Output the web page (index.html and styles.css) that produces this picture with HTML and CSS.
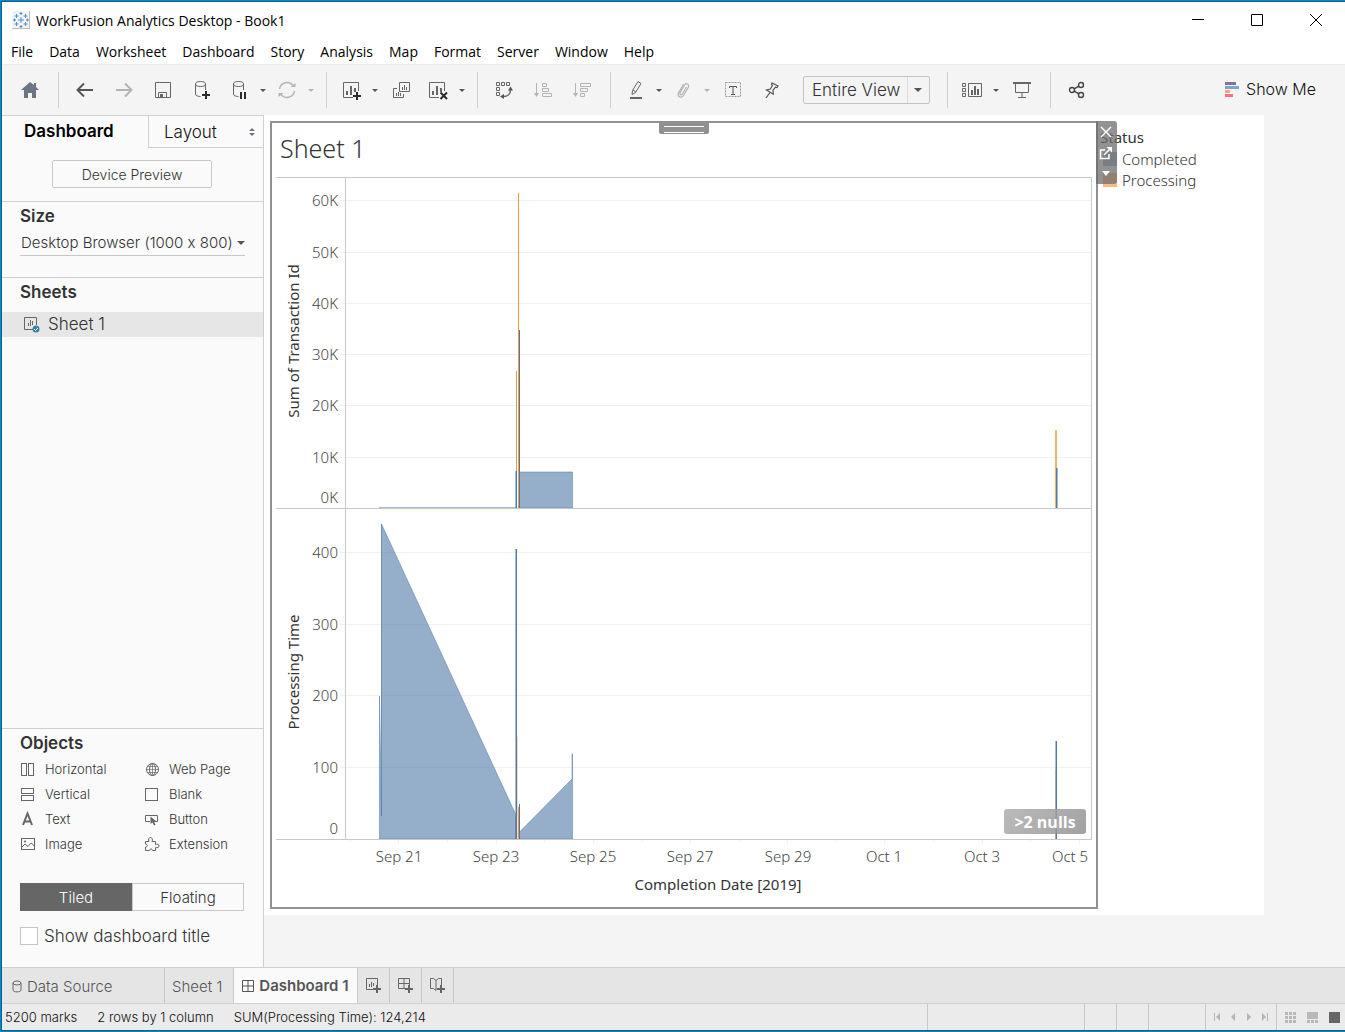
FILE: index.html
```html
<!DOCTYPE html>
<html lang="en">
<head>
    <meta charset="UTF-8">
    <meta name="viewport" content="width=device-width, initial-scale=1.0">
    <title>WorkFusion Analytics Desktop - Book1</title>
    <link rel="stylesheet" href="styles.css">
</head>
<body>
    <div class="window">
        <header class="title-bar">
            <svg class="app-icon" width="18" height="18" viewBox="0 0 18 18">
                <rect width="18" height="18" fill="#bdbdbd"/>
                <rect width="17" height="17" fill="#f4f4f4"/>
                <path d="M9 6v6M6 9h6M9 1v3M7.500 2.500h3M9 14v3M7.500 15.500h3M1 9h3M2.500 7.500v3M14 9h3M15.500 7.500v3M4.500 3v4M2.500 5h4M13.500 3v4M11.500 5h4M4.500 11v4M2.500 13h4M13.500 11v4M11.500 13h4" stroke="#4f93c4" fill="none"/>
            </svg>
            <h1>WorkFusion Analytics Desktop - Book1</h1>
            <div class="window-buttons">
                <button aria-label="Minimize"><svg width="12" height="12"><path d="M0 5.500h12" stroke="#000"/></svg></button>
                <button aria-label="Maximize"><svg width="12" height="12"><path d="M.5.5h11v11H.5z" stroke="#000" fill="none"/></svg></button>
                <button aria-label="Close"><svg width="12" height="12"><path d="M0 0l12 12M12 0L0 12" stroke="#000"/></svg></button>
            </div>
        </header>

        <nav class="menu-bar">
            <button>File</button>
            <button>Data</button>
            <button>Worksheet</button>
            <button>Dashboard</button>
            <button>Story</button>
            <button>Analysis</button>
            <button>Map</button>
            <button>Format</button>
            <button>Server</button>
            <button>Window</button>
            <button>Help</button>
        </nav>

        <div class="toolbar">
            <div class="group first">
                <button class="tool" aria-label="Home">
                    <svg width="18" height="18"><path d="M9 1L0 9h3v8h4v-5h4v5h4V9h3l-3-3V2h-2v2z" fill="#6b7585"/></svg>
                </button>
            </div>
            <div class="group">
                <button class="tool" aria-label="Undo">
                    <svg width="18" height="18"><path d="M17 9H2M8 2.500L1.500 9 8 15.500" stroke="#555" stroke-width="2" fill="none"/></svg>
                </button>
                <button class="tool" aria-label="Redo">
                    <svg width="18" height="18"><path d="M1 9h15M10 2.500L16.500 9 10 15.500" stroke="#b4b4b4" stroke-width="2" fill="none"/></svg>
                </button>
                <button class="tool" aria-label="Save">
                    <svg width="18" height="18" fill="none" stroke="#666"><path d="M1.500 1.500h15v15h-15zM4.500 16v-4.500h8V16"/><path d="M6 13h3v3H6z" fill="#666" stroke="none"/></svg>
                </button>
                <button class="tool" aria-label="New Data Source">
                    <svg width="18" height="20" fill="none" stroke="#666"><ellipse cx="7.500" cy="4" rx="5" ry="2.500"/><path d="M2.500 4v10c0 1.500 2 2.500 5 2.500M12.500 4v6"/><path d="M13 11v8M9 15h8" stroke="#2b2b2b" stroke-width="2"/></svg>
                </button>
                <button class="tool with-menu" aria-label="Pause Auto Updates">
                    <svg width="18" height="20" fill="none" stroke="#666"><ellipse cx="8.500" cy="4" rx="5" ry="2.500"/><path d="M3.500 4v10c0 1.500 2 2.500 5 2.500M13.500 4v6"/><path d="M11 12v7M15 12v7" stroke="#2b2b2b" stroke-width="2"/></svg>
                </button>
                <button class="caret" aria-label="Auto update options"></button>
                <button class="tool with-menu" aria-label="Run Update">
                    <svg width="18" height="18" fill="none" stroke="#b4b4b4" stroke-width="1.500"><path d="M1.500 8a7.500 7.500 0 0 1 14-2.500M16.500 10a7.500 7.500 0 0 1-14 2.500"/><path d="M12.500 6h5V2zM5.500 12h-5v4z" fill="#b4b4b4" stroke="none"/></svg>
                </button>
                <button class="caret off" aria-label="Update options"></button>
            </div>
            <div class="group">
                <button class="tool with-menu" aria-label="New Worksheet">
                    <svg width="20" height="20" fill="none" stroke="#666"><path d="M17.500 11V2.500h-15v15H12"/><path d="M6 15v-4M10 15V6M14 12V8" stroke-width="2"/><path d="M16 12v8M12 16h8" stroke="#2b2b2b" stroke-width="2"/></svg>
                </button>
                <button class="caret" aria-label="New worksheet options"></button>
                <button class="tool" aria-label="Duplicate">
                    <svg width="18" height="18" fill="none" stroke="#666"><path d="M7.500 1.500h10v9h-10zM5 7.500H1.500v9h10V13M10.500 9V6M12.500 9V4M14.500 9V6M4.500 15v-3M6.500 15v-4M8.500 15v-3"/></svg>
                </button>
                <button class="tool with-menu" aria-label="Clear Sheet">
                    <svg width="20" height="20" fill="none" stroke="#666"><path d="M16.500 11V2.500h-15v15H11"/><path d="M5 15v-4M9 15V6M13 12V8" stroke-width="2"/><path d="M12.500 12.500l6.500 6.500M19 12.500L12.500 19" stroke="#2b2b2b" stroke-width="2"/></svg>
                </button>
                <button class="caret" aria-label="Clear sheet options"></button>
            </div>
            <div class="group">
                <button class="tool" aria-label="Swap Rows and Columns">
                    <svg width="18" height="18" fill="none" stroke="#666"><path d="M1.500 1.500h3v3h-3zM6.500 1.500h3v3h-3zM11.500 1.500h3v3h-3zM1.500 6.500h3v3h-3zM1.500 11.500h3v3h-3z"/><path d="M15.500 9c0 4-3 6.500-7 6.500" stroke-width="1.500"/><path d="M13 9.500l2.500-4 2.500 4zM9 13l-4 2.500L9 18z" fill="#555" stroke="none"/></svg>
                </button>
                <button class="tool" aria-label="Sort Ascending">
                    <svg width="18" height="18" fill="none" stroke="#b4b4b4"><path d="M2.500 2v12M8.500 2.500h4v3h-4zM8.500 7.500h6v3h-6zM8.500 12.500h9v3h-9z"/><path d="M0 12h5l-2.500 4z" fill="#b4b4b4" stroke="none"/></svg>
                </button>
                <button class="tool" aria-label="Sort Descending">
                    <svg width="18" height="18" fill="none" stroke="#b4b4b4"><path d="M2.500 2v12M7.500 2.500h10v3h-10zM7.500 7.500h7v3h-7zM7.500 12.500h4v3h-4z"/><path d="M0 12h5l-2.500 4z" fill="#b4b4b4" stroke="none"/></svg>
                </button>
            </div>
            <div class="group">
                <button class="tool with-menu" aria-label="Highlight">
                    <svg width="18" height="20" fill="none" stroke="#666"><path d="M6.500 10.500L12 1.500l3 2-5.500 9-3.500 2zM7 10l3 2"/><path d="M4 18h12" stroke-width="2"/></svg>
                </button>
                <button class="caret" aria-label="Highlight options"></button>
                <button class="tool with-menu" aria-label="Group Members">
                    <svg width="18" height="18" fill="none" stroke="#b4b4b4" stroke-width="1.200"><path d="M12.500 6l-4 7c-1 1.500-3 .5-2.500-1l4.500-8c1.500-2.500 5-1 4 2L9.500 14.500c-2 3-6.500 1.500-5-2.500L9.500 3"/></svg>
                </button>
                <button class="caret off" aria-label="Group options"></button>
                <button class="tool" aria-label="Show Mark Labels">
                    <svg width="18" height="18" fill="none" stroke="#999"><rect x="1.500" y="1.500" width="15" height="14" stroke-dasharray="2 1"/><path d="M5.500 7V5.500h7V7M9 5.500v8M7 13.500h4" stroke="#555"/></svg>
                </button>
                <button class="tool" aria-label="Fix Axes">
                    <svg width="18" height="18" fill="none" stroke="#555" stroke-width="1.200"><path d="M9 2l6 3-1 1.500-1.500-.3-2.500 3 .3 4L3.500 9l3.800-1 2-3.200L8.500 3zM7 11.500L3 17"/></svg>
                </button>
                <span class="fit-select">
                    <select aria-label="Fit">
                        <option>Entire View</option>
                        <option>Standard</option>
                        <option>Fit Width</option>
                        <option>Fit Height</option>
                    </select>
                </span>
            </div>
            <div class="group">
                <button class="tool with-menu" aria-label="Show/Hide Cards">
                    <svg width="22" height="18" fill="none" stroke="#666"><path d="M1.500 2.500h3v3h-3zM1.500 7.500h3v3h-3zM1.500 12.500h3v3h-3zM7.500 2.500h13v13h-13z"/><path d="M11 14V9M14 14V5M17 14V8" stroke-width="2"/></svg>
                </button>
                <button class="caret" aria-label="Card options"></button>
                <button class="tool" aria-label="Presentation Mode">
                    <svg width="18" height="18" fill="none" stroke="#666"><path d="M2.500 3v8.500h13V3M9 12v4M5 16.500h8"/><path d="M0 2h18" stroke-width="2"/></svg>
                </button>
            </div>
            <div class="group last">
                <button class="tool" aria-label="Share">
                    <svg width="18" height="18" fill="none" stroke="#444" stroke-width="1.400"><circle cx="4" cy="9" r="2.500"/><circle cx="13" cy="4" r="2.500"/><circle cx="13" cy="14" r="2.500"/><path d="M6.200 7.800l4.600-2.600M6.200 10.200l4.600 2.600"/></svg>
                </button>
            </div>
            <button class="show-me">
                <svg width="15" height="15"><path d="M0 0h11v3H0z" fill="#86709c"/><path d="M0 4h14v3H0z" fill="#7ba6cf"/><path d="M0 8h5v3H0z" fill="#f9a57c"/><path d="M0 12h8v3H0z" fill="#ff6d80"/></svg>
                Show Me
            </button>
        </div>

        <main class="main">
            <aside class="sidebar">
                <div class="pane-tabs">
                    <button class="pane-tab active">Dashboard</button>
                    <button class="pane-tab">Layout
                        <svg width="6" height="8"><path d="M0 3l3-3 3 3zM0 5h6L3 8z" fill="#6b7585"/></svg>
                    </button>
                </div>
                <section class="device">
                    <button class="device-preview">Device Preview</button>
                </section>
                <section class="size">
                    <h2><label for="size">Size</label></h2>
                    <span class="size-select">
                        <select id="size">
                            <option>Desktop Browser (1000 x 800)</option>
                            <option>Automatic</option>
                        </select>
                    </span>
                </section>
                <section class="sheets">
                    <h2>Sheets</h2>
                    <button class="sheet-item">
                        <svg width="18" height="17" fill="none" stroke="#666"><path d="M10 13.500H1.500v-12h12V9M5.500 10V7M7.500 10V4M9.500 9V5"/><circle cx="13" cy="13" r="3.500" fill="#3585a8" stroke="none"/><path d="M11 13l1.500 1.500L15 12" stroke="#fff"/></svg>
                        Sheet 1
                    </button>
                </section>
                <section class="objects">
                    <h2>Objects</h2>
                    <div class="object-grid">
                        <button><svg width="16" height="16" fill="none" stroke="#666"><rect x="1.500" y="2.500" width="5" height="12"/><rect x="8.500" y="2.500" width="5" height="12"/></svg>Horizontal</button>
                        <button><svg width="16" height="16" fill="none" stroke="#666"><circle cx="8.500" cy="8.500" r="6"/><ellipse cx="8.500" cy="8.500" rx="3" ry="6"/><path d="M8.500 2v13M2 8.500h13M4 5.500h9M4 11.500h9" stroke-opacity=".7"/></svg>Web Page</button>
                        <button><svg width="16" height="16" fill="none" stroke="#666"><rect x="1.500" y="2.500" width="12" height="5"/><rect x="1.500" y="9.500" width="12" height="5"/></svg>Vertical</button>
                        <button><svg width="16" height="16" fill="none" stroke="#666"><rect x="1.500" y="2.500" width="12" height="12"/></svg>Blank</button>
                        <button><svg width="16" height="16" fill="none" stroke="#666" stroke-width="2"><path d="M3 14L7.500 2.500 12 14M4.500 10.500h6"/></svg>Text</button>
                        <button><svg width="16" height="16" fill="none" stroke="#666"><path d="M6 10.500H1.500v-6h12v6H12"/><path d="M6.500 5.500v7.500l2-1.500 1.500 3 1.500-.7-1.300-2.800H13z" fill="#666" stroke="none"/></svg>Button</button>
                        <button><svg width="16" height="16" fill="none" stroke="#666"><rect x="1.500" y="2.500" width="13" height="11"/><path d="M2 11l3-3 3 2.500L11 7l3.500 3"/><circle cx="5" cy="5.500" r="1" fill="#666" stroke="none"/></svg>Image</button>
                        <button><svg width="16" height="16" fill="none" stroke="#666"><path d="M1.500 5.500H5c-1-2 0-4 1.500-4s2.500 2 1.500 4h3.500v3c2-1 3.500 0 3.500 1.500s-1.500 2-3.500 1.500v3H8.500c0-2-3-2-3 0h-4v-3.500c2.500 0 2.500-3 0-3z"/></svg>Extension</button>
                    </div>
                    <div class="mode">
                        <button class="active">Tiled</button>
                        <button>Floating</button>
                    </div>
                    <label class="show-title"><input type="checkbox">Show dashboard title</label>
                </section>
            </aside>

            <div class="workspace">
                <div class="canvas">
                    <section class="zone">
                        <div class="drag-handle"></div>
                        <h2>Sheet 1</h2>
                        <svg class="chart" viewBox="0 0 816 725" role="img" aria-label="Transaction id and processing time by completion date">
                            <!-- grid -->
                            <path class="grid-line" d="M64 23.500h751M64 75.500h751M64 126.500h751M64 177.500h751M64 228.500h751M64 280.500h751M64 375.500h751M64 447.500h751M64 518.500h751M64 590.500h751"/>
                            <path class="grid-line" d="M74.500 663v2M122.500 663v4M171.500 663v2M220.500 663v4M268.500 663v2M317.500 663v4M366.500 663v2M414.500 663v4M463.500 663v2M511.500 663v4M560.500 663v2M608.500 663v4M657.500 663v2M706.500 663v4M754.500 663v2M803.500 663v4"/>

                            <!-- sum of transaction id -->
                            <path class="completed-line" d="M103 330.500h138"/>
                            <path class="processing-line" d="M240.500 194v137M242.500 16v315"/>
                            <path class="completed" d="M243.500 295h53v36h-53z"/>
                            <path class="completed-line strong" d="M240.500 294v37M243.500 153v178"/>
                            <path class="completed-line" d="M239.500 294v37"/>
                            <path class="processing-line wide" d="M780 253v78"/>
                            <path class="completed-line strong" d="M780.500 291v40"/>
                            <path class="completed-line" d="M781.500 291v40"/>

                            <!-- processing time -->
                            <path class="completed" d="M103.500 662V519l2 120V347L240 638v24z"/>
                            <path class="completed-line" d="M105.500 347v292"/>
                            <path class="completed-line strong" d="M240.500 372v290"/>
                            <path class="completed-line" d="M239.500 372v290"/>
                            <path class="processing-faint" d="M241.500 560v102"/>
                            <path class="completed-line strong" d="M243.500 627v35"/>
                            <path class="processing-line" d="M242.500 630v32"/>
                            <path class="completed" d="M243.500 662v-7l52.500-53v-25h.5v85z"/>
                            <path class="processing-faint" d="M779.500 592v70"/>
                            <path class="completed-line strong" d="M780.500 564v98"/>
                            <path class="completed-line" d="M779.500 564v98"/>

                            <path class="axis-line" d="M0 .5h816M0 331.500h816M0 662.500h816M69.500 0v662M815.500 0v662"/>

                            <g class="tick end">
                                <text x="62" y="29">60K</text>
                                <text x="62" y="81">50K</text>
                                <text x="62" y="132">40K</text>
                                <text x="62" y="183">30K</text>
                                <text x="62" y="234">20K</text>
                                <text x="62" y="286">10K</text>
                                <text x="62" y="326">0K</text>
                                <text x="62" y="381">400</text>
                                <text x="62" y="453">300</text>
                                <text x="62" y="524">200</text>
                                <text x="62" y="596">100</text>
                                <text x="62" y="657">0</text>
                            </g>
                            <g class="tick">
                                <text x="123" y="685">Sep 21</text>
                                <text x="220" y="685">Sep 23</text>
                                <text x="317" y="685">Sep 25</text>
                                <text x="414" y="685">Sep 27</text>
                                <text x="512" y="685">Sep 29</text>
                                <text x="608" y="685">Oct 1</text>
                                <text x="706" y="685">Oct 3</text>
                                <text x="794" y="685">Oct 5</text>
                            </g>
                            <g class="axis-title">
                                <text transform="translate(23 164) rotate(-90)">Sum of Transaction Id</text>
                                <text transform="translate(23 495) rotate(-90)">Processing Time</text>
                                <text x="442" y="713">Completion Date [2019]</text>
                            </g>
                        </svg>
                        <button class="nulls">&gt;2 nulls</button>
                        <div class="zone-tools">
                            <button aria-label="Remove from dashboard"><svg width="12" height="12"><path d="M1 1l10 10M11 1L1 11" stroke="#fff" stroke-width="1.500"/></svg></button>
                            <button aria-label="Go to sheet"><svg width="14" height="14" fill="none" stroke="#fff" stroke-width="1.500"><path d="M6 4H1.500v8.500H10V8M5 9l6-6"/><path d="M7.500 1H13v5.500z" fill="#fff" stroke="none"/></svg></button>
                            <button aria-label="More options"><svg width="8" height="5"><path d="M0 0h8L4 5z" fill="#fff"/></svg></button>
                        </div>
                    </section>
                    <section class="legend">
                        <h3>Status</h3>
                        <ul>
                            <li><span class="swatch blue"></span>Completed</li>
                            <li><span class="swatch orange"></span>Processing</li>
                        </ul>
                    </section>
                </div>
            </div>
        </main>

        <nav class="sheet-tabs">
            <button class="source"><svg width="10" height="13" fill="none" stroke="#666"><ellipse cx="5" cy="3" rx="4" ry="2"/><path d="M1 3v7c0 2.500 8 2.500 8 0V3"/></svg>Data Source</button>
            <button>Sheet 1</button>
            <button class="active"><svg width="12" height="12" fill="none" stroke="#555"><path d="M.5.5h11v11H.5zM6 0v12M0 6h12"/></svg>Dashboard 1</button>
            <button class="add" aria-label="New Worksheet"><svg width="17" height="17" fill="none" stroke="#666"><path d="M8 12.500H1.500v-11h11V8M4.500 10V7M6.500 10V5M8.500 9V6"/><path d="M12 8v8M8 12h8" stroke-width="2"/></svg></button>
            <button class="add" aria-label="New Dashboard"><svg width="17" height="17" fill="none" stroke="#666"><path d="M8 11.500H1.500v-10h11V8M7 1v10M1 6.500h12"/><path d="M12 8v8M8 12h8" stroke-width="2"/></svg></button>
            <button class="add" aria-label="New Story"><svg width="17" height="17" fill="none" stroke="#666"><path d="M7 13.500l-2.500-2h-3v-10h3l2.500 2 2.500-2h3V8M7 3.500v10"/><path d="M12 8v8M8 12h8" stroke-width="2"/></svg></button>
        </nav>

        <footer class="status-bar">
            <span>5200 marks</span>
            <span>2 rows by 1 column</span>
            <span>SUM(Processing Time): 124,214</span>
            <div class="cells">
                <div class="cell wide"></div>
                <div class="cell"></div>
                <div class="cell"></div>
                <div class="cell medium"></div>
                <div class="cell pager">
                    <button aria-label="First sheet"><svg width="6" height="8" fill="#b4b4b4"><path d="M0 0h1v8H0zM6 0v8L2 4z"/></svg></button>
                    <button aria-label="Previous sheet"><svg width="6" height="8" fill="#b4b4b4"><path d="M5 0v8L1 4z"/></svg></button>
                    <button aria-label="Next sheet"><svg width="6" height="8" fill="#b4b4b4"><path d="M1 0v8l4-4z"/></svg></button>
                    <button aria-label="Last sheet"><svg width="6" height="8" fill="#b4b4b4"><path d="M5 0h1v8H5zM0 0v8l4-4z"/></svg></button>
                </div>
                <div class="cell views">
                    <button aria-label="Sheet sorter"><svg width="11" height="11" fill="#b8b8b8"><path d="M0 0h3v3H0zM4 0h3v3H4zM8 0h3v3H8zM0 4h3v3H0zM4 4h3v3H4zM8 4h3v3H8zM0 8h3v3H0zM4 8h3v3H4zM8 8h3v3H8z"/></svg></button>
                    <button aria-label="Filmstrip"><svg width="11" height="11" fill="#b8b8b8"><path d="M0 0h11v7H0zM0 8h3v3H0zM4 8h3v3H4zM8 8h3v3H8z"/></svg></button>
                    <button aria-label="Tabs"><svg width="11" height="11" fill="#666"><path d="M0 0h11v11H0z"/></svg></button>
                </div>
            </div>
        </footer>
    </div>
</body>
</html>
```
FILE: styles.css
```css
* {
    margin: 0;
    padding: 0;
    box-sizing: border-box;
}

body {
    display: flex;
    flex-direction: column;
    min-height: 100vh;
    border: 1px solid #0087d0;
    border-right: none;
    font-family: 'Inter', sans-serif;
    font-feature-settings: 'calt' 0;
    font-size: 15px;
    font-weight: 300;
    color: #333;
    background: #f4f4f4;
}

button,
select,
input {
    font: inherit;
    font-feature-settings: inherit;
    color: inherit;
    background: none;
    border: none;
    border-radius: 0;
}

select {
    appearance: none;
}

svg {
    display: block;
    flex: none;
}

ul {
    list-style: none;
}

.window {
    display: flex;
    flex: 1;
    flex-direction: column;
    border: 1px solid #14608c;
    border-right: none;
}

/* Title and menu */
.title-bar {
    display: flex;
    align-items: center;
    height: 36px;
    padding-left: 10px;
    background: #fff;
    color: #000;
    font-family: 'Open Sans', sans-serif;
}

.title-bar h1 {
    flex: 1;
    margin-left: 6px;
    font-size: 14px;
    font-weight: 400;
}

.window-buttons {
    display: flex;
}

.window-buttons button {
    display: flex;
    align-items: center;
    justify-content: center;
    width: 59px;
    height: 36px;
}

.menu-bar {
    display: flex;
    gap: 16px;
    height: 26px;
    padding-left: 9px;
    background: #fff;
    color: #000;
    font-family: 'Open Sans', sans-serif;
    font-size: 14px;
    font-weight: 400;
    line-height: 28px;
}

/* Toolbar */
.toolbar {
    display: flex;
    align-items: center;
    height: 51px;
    border-top: 1px solid #ececec;
    background: #f4f4f4;
}

.group {
    display: flex;
    align-items: center;
    height: 36px;
    padding: 0 9px 0 6px;
    border-right: 1px solid #cfcfcf;
}

.group.first {
    padding: 0 9px 0 8px;
}

.group.last {
    border-right: none;
}

.tool {
    display: flex;
    align-items: center;
    justify-content: center;
    width: 39px;
    height: 32px;
    padding-bottom: 1px;
}

.tool.with-menu {
    width: 36px;
}

.caret {
    display: flex;
    align-items: center;
    justify-content: center;
    width: 12px;
    height: 32px;
    color: #555;
}

.caret::after {
    content: '';
    border: 3px solid transparent;
    border-top-color: currentColor;
    border-bottom: none;
}

.caret.off {
    color: #b4b4b4;
}

.fit-select {
    position: relative;
    margin: 0 8px 0 12px;
}

.fit-select select {
    display: block;
    width: 127px;
    height: 28px;
    padding: 0 24px 0 8px;
    border: 1px solid #c4c4c4;
    border-radius: 2px;
    font-size: 17px;
}

.fit-select::after {
    content: '';
    position: absolute;
    top: 12px;
    right: 8px;
    border: 4px solid transparent;
    border-top-color: #555;
    border-bottom: none;
}

.fit-select::before {
    content: '';
    position: absolute;
    top: 1px;
    bottom: 1px;
    right: 22px;
    border-left: 1px solid #dcdcdc;
}

.show-me {
    display: flex;
    align-items: center;
    gap: 6px;
    margin-left: auto;
    padding: 0 29px 2px 0;
    color: #111;
    font-size: 16px;
}

/* Side pane */
.main {
    display: flex;
    flex: 1;
}

.sidebar {
    display: flex;
    flex-direction: column;
    flex: none;
    width: 262px;
    border-top: 1px solid #cfcfcf;
    border-right: 1px solid #cfcfcf;
    background: #fafafa;
}

.sidebar h2 {
    font-size: 17px;
    font-weight: 600;
    line-height: 20px;
}

.pane-tabs {
    display: flex;
    height: 32px;
}

.pane-tab {
    width: 146px;
    padding-left: 22px;
    text-align: left;
    font-size: 17px;
    color: #111;
}

.pane-tab.active {
    padding-bottom: 2px;
    font-weight: 600;
    color: #000;
}

.pane-tab:not(.active) {
    display: flex;
    flex: 1;
    align-items: center;
    justify-content: space-between;
    padding: 0 8px 0 15px;
    border-left: 1px solid #cfcfcf;
    border-bottom: 1px solid #cfcfcf;
}

.device {
    padding: 12px 51px 13px 50px;
    border-bottom: 1px solid #cfcfcf;
}

.device-preview {
    width: 100%;
    height: 28px;
    border: 1px solid #c8c8c8;
    border-radius: 2px;
    font-size: 14px;
}

.size {
    height: 76px;
    padding: 4px 18px 0;
    border-bottom: 1px solid #cfcfcf;
}

.size-select {
    display: block;
    position: relative;
}

.size-select select {
    width: 100%;
    height: 30px;
    padding: 4px 0 0 1px;
    border-bottom: 1px solid #c8c8c8;
    font-size: 15px;
}

.size-select::after {
    content: '';
    position: absolute;
    top: 15px;
    right: 0;
    border: 4px solid transparent;
    border-top-color: #555;
    border-bottom: none;
}

.sheets {
    flex: 1;
    padding-top: 4px;
}

.sheets h2 {
    padding-left: 18px;
}

.sheet-item {
    display: flex;
    align-items: center;
    gap: 7px;
    width: 100%;
    height: 25px;
    margin-top: 10px;
    padding: 0 0 1px 21px;
    background: #e6e6e6;
    font-size: 17px;
}

.objects {
    padding: 4px 19px 21px 18px;
    border-top: 1px solid #cfcfcf;
}

.object-grid {
    display: grid;
    grid-template-columns: 124px 1fr;
    margin-top: 3px;
}

.object-grid button {
    display: flex;
    align-items: center;
    gap: 9px;
    height: 25px;
    font-size: 13px;
}

.mode {
    display: flex;
    height: 28px;
    margin-top: 27px;
    font-size: 15px;
}

.mode button {
    flex: 1;
    border: 1px solid #c8c8c8;
}

.mode .active {
    border-color: #666;
    background: #666;
    color: #fff;
}

.show-title {
    display: flex;
    align-items: center;
    gap: 6px;
    height: 20px;
    margin-top: 15px;
    font-size: 17px;
}

.show-title input {
    appearance: none;
    width: 18px;
    height: 18px;
    border: 1px solid #c4c4c4;
    background: #fff;
}

/* Dashboard */
.workspace {
    flex: 1;
    min-width: 0;
}

.canvas {
    display: flex;
    max-width: 1000px;
    padding: 6px;
    background: #fff;
    font-family: 'Noto Sans', sans-serif;
}

.zone {
    position: relative;
    flex: 1;
    padding: 0 4px 5px;
    border: 2px solid #919191;
}

.zone h2 {
    height: 54px;
    padding-left: 4px;
    font-size: 25px;
    font-weight: 300;
    line-height: 50px;
}

.drag-handle {
    position: absolute;
    top: 0;
    left: 50%;
    width: 50px;
    height: 11px;
    margin-left: -25px;
    padding: 3px 5px;
    border-radius: 0 0 2px 2px;
    background: #919191;
}

.drag-handle::before {
    content: '';
    display: block;
    height: 5px;
    border: 1px solid #fff;
    border-width: 1px 0;
}

.chart {
    width: 100%;
    height: auto;
}

.grid-line {
    stroke: #f0f0f0;
}

.axis-line {
    stroke: #c8c8c8;
    fill: none;
}

.completed {
    fill: #4e79a7;
    fill-opacity: 0.6;
    stroke: #4e79a7;
    stroke-opacity: 0.5;
}

.completed-line {
    stroke: #4e79a7;
    stroke-opacity: 0.5;
    fill: none;
}

.completed-line.strong {
    stroke-opacity: 1;
}

.processing-line {
    stroke: #f28e2b;
    stroke-opacity: 0.9;
}

.processing-line.wide {
    stroke-width: 2;
    stroke-opacity: 0.7;
}

.processing-faint {
    stroke: #f28e2b;
    stroke-opacity: 0.3;
}

.tick {
    font-size: 15px;
    font-weight: 300;
    fill: #444;
    text-anchor: middle;
}

.tick.end {
    text-anchor: end;
}

.axis-title {
    font-size: 15px;
    font-weight: 400;
    fill: #333;
    text-anchor: middle;
}

.nulls {
    position: absolute;
    right: 10px;
    bottom: 73px;
    width: 82px;
    height: 25px;
    border-radius: 3px;
    background: linear-gradient(135deg, rgba(175, 175, 175, 0.85), rgba(145, 145, 145, 0.85));
    color: #fff;
    font-family: 'Open Sans', sans-serif;
    font-size: 16px;
    font-weight: 700;
}

.zone-tools {
    position: absolute;
    top: -2px;
    left: 100%;
    width: 21px;
    border-radius: 0 3px 3px 0;
    background: rgba(110, 110, 110, 0.75);
}

.zone-tools button {
    display: flex;
    align-items: center;
    justify-content: center;
    width: 20px;
    height: 21px;
}

.legend {
    width: 160px;
    padding: 5px 0 0 2px;
    font-size: 15px;
}

.legend h3 {
    font-size: 15px;
    font-weight: 400;
    line-height: 22px;
}

.legend li {
    display: flex;
    align-items: center;
    gap: 5px;
    height: 21px;
    padding-left: 3px;
}

.swatch {
    width: 14px;
    height: 14px;
}

.swatch.blue {
    background: #95aeca;
}

.swatch.orange {
    background: #f7bb80;
}

/* Bottom bars */
.sheet-tabs {
    display: flex;
    height: 37px;
    border-top: 1px solid #cfcfcf;
    border-bottom: 1px solid #cfcfcf;
    background: #e5e5e5;
    color: #555;
}

.sheet-tabs button {
    display: flex;
    align-items: center;
    gap: 5px;
    padding: 1px 11px 0 7px;
    border-right: 1px solid #c8c8c8;
    font-size: 15px;
}

.sheet-tabs .source {
    width: 163px;
    padding-left: 10px;
}

.sheet-tabs .active {
    padding: 0 8px;
    background: #fafafa;
    font-weight: 600;
}

.sheet-tabs .add {
    justify-content: center;
    width: 32px;
    padding: 0;
}

.status-bar {
    display: flex;
    align-items: center;
    gap: 20px;
    height: 26px;
    padding-left: 3px;
    background: #ebebeb;
    color: #111;
    font-size: 13px;
}

.cells {
    display: flex;
    align-self: stretch;
    margin-left: auto;
}

.cell {
    width: 32px;
    border-left: 1px solid #c8c8c8;
}

.cell.wide {
    width: 157px;
}

.cell.medium {
    width: 57px;
}

.cell.pager {
    display: flex;
    align-items: center;
    gap: 10px;
    width: 71px;
    padding-left: 8px;
}

.cell.views {
    display: flex;
    align-items: center;
    gap: 11px;
    width: 69px;
    padding-left: 8px;
}
```
